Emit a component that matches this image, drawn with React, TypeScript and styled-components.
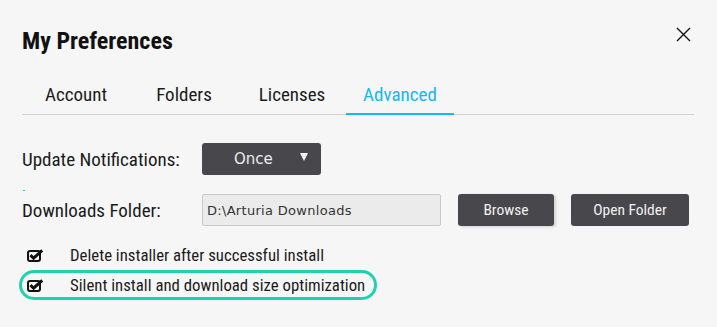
import React, { useState } from 'react';
import styled, { createGlobalStyle } from 'styled-components';

const COLORS = {
  BACKGROUND: '#f6f6f6',
  TEXT: '#1b1b1b',
  BLUE: '#13b9f1',
  LINE: '#d2d2d2',
  DARK: '#48474c',
  INPUT: '#ebebeb',
  TEAL: '#1dd3ae'
};

const FONT = `'Roboto Condensed', Roboto, 'Noto Sans', sans-serif`;

const GlobalStyle = createGlobalStyle`
  body {
    margin: 0;
    background: ${COLORS.BACKGROUND};
    font-family: ${FONT};
    color: ${COLORS.TEXT};
  }
`;

const TABS = ['Account', 'Folders', 'Licenses', 'Advanced'];

const OPTIONS = [
  { id: 'delete', label: 'Delete installer after successful install', highlighted: false },
  { id: 'silent', label: 'Silent install and download size optimization', highlighted: true }
];

function CloseIcon() {
  return (
    <svg width="15" height="15" viewBox="0 0 15 15">
      <path d="M1 1 L14 14 M14 1 L1 14" stroke="#111" strokeWidth="1.4" />
    </svg>
  );
}

function CheckIcon() {
  return (
    <svg width="17" height="13" viewBox="0 0 17 13">
      <rect x="1" y="2" width="12" height="10" rx="2" fill="none" stroke="#111" strokeWidth="2" />
      <path d="M3.4 6.2 L6.6 9.2 L15.2 1.4" fill="none" stroke="#111" strokeWidth="3" />
    </svg>
  );
}

function App() {
  const [activeTab, setActiveTab] = useState('Advanced');

  return (
    <Dialog>
      <GlobalStyle />
      <Header>
        <Title>My Preferences</Title>
        <CloseButton>
          <CloseIcon />
        </CloseButton>
      </Header>
      <TabBar>
        {TABS.map((tab) => (
          <Tab key={tab} active={tab === activeTab} onClick={() => setActiveTab(tab)}>
            {tab}
          </Tab>
        ))}
      </TabBar>
      <Settings>
        <SettingRow>
          <Label>Update Notifications:</Label>
          <Dropdown>
            <DropdownValue>Once</DropdownValue>
            <Arrow />
          </Dropdown>
        </SettingRow>
        <Marker />
        <SettingRow>
          <Label>Downloads Folder:</Label>
          <PathField>D:\Arturia Downloads</PathField>
          <ActionButton width={96} shadow>Browse</ActionButton>
          <ActionButton width={118}>Open Folder</ActionButton>
        </SettingRow>
      </Settings>
      <Options>
        {OPTIONS.map(({ id, label, highlighted }) => (
          <OptionRow key={id} highlighted={highlighted}>
            <CheckIcon />
            <OptionText>{label}</OptionText>
          </OptionRow>
        ))}
      </Options>
    </Dialog>
  );
}

const Dialog = styled.div`
  display: flex;
  flex-direction: column;
  width: 672px;
  padding: 26px 23px 0 22px;
`;

const Header = styled.div`
  display: flex;
  justify-content: space-between;
  align-items: flex-start;
  height: 30px;
`;

const Title = styled.h1`
  margin: 0;
  font-size: 24px;
  line-height: 30px;
  font-weight: 700;
  color: #111;
`;

const CloseButton = styled.div`
  display: flex;
  margin: 1px 3px 0 0;
  cursor: pointer;
`;

const TabBar = styled.div`
  display: flex;
  margin-top: 29px;
  border-bottom: 1px solid ${COLORS.LINE};
`;

const Tab = styled.div<{ active: boolean }>`
  width: 108px;
  text-align: center;
  font-size: 19px;
  line-height: 20px;
  padding-bottom: 8px;
  margin-bottom: -1px;
  color: ${({ active }) => (active ? COLORS.BLUE : COLORS.TEXT)};
  border-bottom: 2px solid ${({ active }) => (active ? COLORS.BLUE : 'transparent')};
  cursor: pointer;
`;

const Settings = styled.div`
  display: flex;
  flex-direction: column;
  margin-top: 28px;
`;

const SettingRow = styled.div`
  display: flex;
  align-items: center;
  height: 32px;
  gap: 17px;
`;

const Label = styled.span`
  width: 163px;
  font-size: 19px;
`;

const Dropdown = styled.div`
  display: flex;
  align-items: center;
  width: 119px;
  height: 32px;
  box-sizing: border-box;
  padding: 0 13px 0 32px;
  background: ${COLORS.DARK};
  border-radius: 3px;
`;

const DropdownValue = styled.span`
  flex: 1;
  font-family: 'DejaVu Sans', sans-serif;
  font-size: 15px;
  color: #ececec;
`;

const Arrow = styled.span`
  width: 0;
  height: 0;
  margin-top: -4px;
  border-left: 4.5px solid transparent;
  border-right: 4.5px solid transparent;
  border-top: 8px solid #f2f2f2;
`;

const Marker = styled.div`
  width: 2px;
  height: 1px;
  margin: 15px 0 3px 1px;
  background: ${COLORS.TEAL};
`;

const PathField = styled.div`
  display: flex;
  align-items: center;
  width: 239px;
  height: 32px;
  box-sizing: border-box;
  padding-left: 4px;
  background: ${COLORS.INPUT};
  border: 1px solid #c9c9c9;
  border-radius: 2px;
  font-family: 'DejaVu Sans', sans-serif;
  font-size: 13px;
  letter-spacing: 0.3px;
  color: #333;
`;

const ActionButton = styled.button<{ width: number; shadow?: boolean }>`
  width: ${({ width }) => width}px;
  height: 32px;
  border: none;
  border-radius: 3px;
  background: ${COLORS.DARK};
  color: #f1f1f1;
  font-family: ${FONT};
  font-size: 15.5px;
  box-shadow: ${({ shadow }) => (shadow ? '2px 1px 3px rgba(0, 0, 0, 0.15)' : 'none')};
  cursor: pointer;
`;

const Options = styled.div`
  display: flex;
  flex-direction: column;
  align-items: flex-start;
  margin: 14px 0 0 -3px;
`;

const OptionRow = styled.div<{ highlighted: boolean }>`
  display: flex;
  align-items: center;
  gap: 26px;
  height: 30px;
  box-sizing: border-box;
  padding: 0 9px 0 5px;
  border: 3px solid ${({ highlighted }) => (highlighted ? COLORS.TEAL : 'transparent')};
  border-radius: 15px;
`;

const OptionText = styled.span`
  font-size: 16.8px;
`;

export default App;
